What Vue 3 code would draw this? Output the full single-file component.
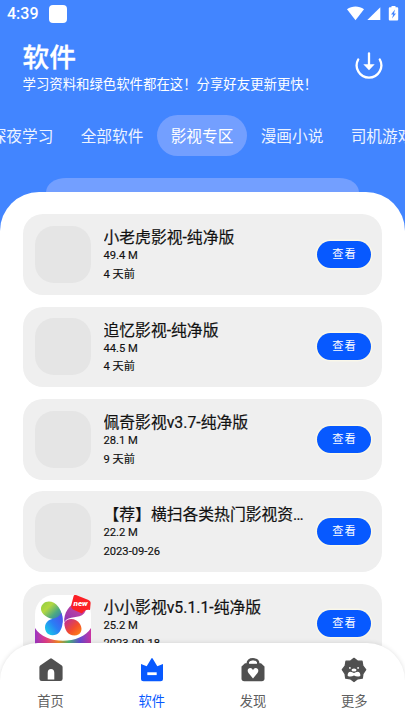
<script setup>
const tabs = ['深夜学习', '全部软件', '影视专区', '漫画小说', '司机游戏']
const apps = [
  { name: '小老虎影视-纯净版', size: '49.4 M', date: '4 天前' },
  { name: '追忆影视-纯净版', size: '44.5 M', date: '4 天前' },
  { name: '佩奇影视v3.7-纯净版', size: '28.1 M', date: '9 天前' },
  { name: '【荐】横扫各类热门影视资源', size: '22.2 M', date: '2023-09-26' },
  { name: '小小影视v5.1.1-纯净版', size: '25.2 M', date: '2023-09-18', logo: true },
]
const nav = [
  { label: '首页', icon: 'home' },
  { label: '软件', icon: 'crown', active: true },
  { label: '发现', icon: 'bag' },
  { label: '更多', icon: 'lion' },
]
</script>

<template>
  <div class="screen">
    <div class="status">
      <span class="time">4:39</span>
      <span class="square"></span>
      <svg class="signals" width="54" height="18" viewBox="0 0 54 18">
        <path d="M1 4.200C6 .7 13 .7 18 4.200L9.500 15.200Z" fill="#fff" />
        <path d="M34.300 2.300V15H21.300Z" fill="#fff" />
        <path d="M45.500 1h4v1.300h1.700a1 1 0 0 1 1 1V14.500a1 1 0 0 1-1 1h-7.400a1 1 0 0 1-1-1V3.300a1 1 0 0 1 1-1h1.700Z" fill="#fff" />
        <path d="M49 4.500 45 9.500h2.200L46 13.500 50 8.500H48Z" fill="#4285ff" />
      </svg>
    </div>

    <header class="head">
      <div>
        <h1>软件</h1>
        <p>学习资料和绿色软件都在这！分享好友更新更快！</p>
      </div>
      <svg class="download" width="30" height="30" viewBox="0 0 30 30">
        <path d="M4.200 9.500A12.300 12.300 0 1 0 25.800 9.500" fill="none" stroke="#fff" stroke-width="2.300" stroke-linecap="round" />
        <path d="M15 3.500V17" stroke="#fff" stroke-width="2.300" stroke-linecap="round" />
        <path d="M9.300 14.300H20.700L15 20.200Z" fill="#fff" />
      </svg>
    </header>

    <nav class="tabs">
      <span v-for="(t, i) in tabs" :key="t" class="tab" :class="{ on: i === 2 }">{{ t }}</span>
    </nav>

    <div class="peek"></div>
    <main class="sheet">
      <article v-for="a in apps" :key="a.name" class="card">
        <div class="thumb" :class="{ logo: a.logo }">
          <svg v-if="a.logo" width="56" height="57" viewBox="0 0 56 57">
            <defs>
              <linearGradient id="wa" x1="0" y1="0" x2="1" y2="1">
                <stop offset="0" stop-color="#8ccf45" /><stop offset=".3" stop-color="#b4d840" /><stop offset=".6" stop-color="#4aa983" /><stop offset="1" stop-color="#3157dc" />
              </linearGradient>
              <linearGradient id="wb" x1="1" y1="0" x2="0" y2="1">
                <stop offset="0" stop-color="#5447e8" /><stop offset=".5" stop-color="#2a7df5" /><stop offset="1" stop-color="#16dde5" />
              </linearGradient>
              <linearGradient id="wc" x1="1" y1="0" x2="0" y2="1">
                <stop offset="0" stop-color="#d84898" /><stop offset="1" stop-color="#8b35b5" />
              </linearGradient>
              <linearGradient id="wd" x1="0" y1="0" x2="1" y2="1">
                <stop offset="0" stop-color="#b52ba8" /><stop offset=".55" stop-color="#f34c2d" /><stop offset="1" stop-color="#ff8b13" />
              </linearGradient>
              <linearGradient id="we">
                <stop offset="0" stop-color="#9b35c2" /><stop offset=".2" stop-color="#e23d86" /><stop offset=".42" stop-color="#f38b23" /><stop offset=".6" stop-color="#48b875" /><stop offset=".8" stop-color="#654bd2" /><stop offset="1" stop-color="#cb32a0" />
              </linearGradient>
            </defs>
            <path d="M27.500 28C25 22.500 20 26 13 22.500C6 19 4 13 8 9C12 5 19 6 23.500 12C27 17 28 22 27.500 28Z" fill="url(#wa)" />
            <path d="M29.300 27C28.500 19 34 8.500 43 7.500C50 7 53 14 49 18.500C44 24 34 20 29.300 27Z" fill="url(#wc)" />
            <path d="M26.500 18C28.500 25 28 32 24.500 37C21 41.500 13.500 41.500 11 36.500C8.500 31 11 25.500 17 24C21 23 24 22 26.500 18Z" fill="url(#wb)" />
            <path d="M29.300 28C32 22.500 41 22.500 45 29C48.500 35 45.500 40.500 39.500 40.500C33 40.500 29.500 35 29.300 28Z" fill="url(#wd)" />
            <path d="M0 33C10 50 46 50 56 33V57H0Z" fill="url(#we)" />
            <path d="M41 0 53.500 5Q56 6 55.600 8.500L55 15Q50 14 47 18.500L38 14.500Q35.500 13 36.300 10L38.500 1.500Q39.200 -.7 41 0Z" fill="#fb2026" />
            <text x="38.500" y="10.500" class="tag">new</text>
          </svg>
        </div>
        <div class="info">
          <h2>{{ a.name }}</h2>
          <div class="meta">{{ a.size }}</div>
          <div class="meta date">{{ a.date }}</div>
        </div>
        <button class="view">查看</button>
      </article>
    </main>

    <footer class="bottom">
      <div v-for="n in nav" :key="n.icon" class="item" :class="{ active: n.active }">
        <svg width="26" height="26" viewBox="0 0 26 26">
          <template v-if="n.icon === 'home'">
            <path d="M12 1.700Q13 1 14 1.700L23.800 8.400Q24.600 9 24.600 10.200V21.700Q24.600 24 22.300 24H3.700Q1.400 24 1.400 21.700V10.200Q1.400 9 2.200 8.400Z" fill="#505050" />
            <path d="M9.700 22.500V16Q9.700 12 13 12T16.300 16V22.500Z" fill="#fff" />
          </template>
          <template v-else-if="n.icon === 'crown'">
            <path d="M2 7 7.700 9.300 12.200 1.700Q13 .5 13.800 1.700L18.300 9.300 24 7V21.800Q24 24.300 21.500 24.300H4.500Q2 24.300 2 21.800Z" fill="#0759ff" />
            <path d="M8.300 16.700H17.700" stroke="#fff" stroke-width="2.800" />
          </template>
          <template v-else-if="n.icon === 'bag'">
            <path d="M7.700 8V6.500Q7.700 2.300 13 2.300T18.300 6.500V8" fill="none" stroke="#505050" stroke-width="2.400" />
            <path d="M5 6.200H21L24.500 9.500V21.500Q24.500 24.300 21.700 24.300H4.300Q1.500 24.300 1.500 21.500V9.500Z" fill="#505050" />
            <path d="M9 6.800Q9.200 3.800 13 3.800T17 6.800Z" fill="#fff" />
            <path d="M13 21.600 8.500 16C5.500 11.500 11.500 9 13 13.300C14.500 9 20.500 11.500 17.500 16Z" fill="#fff" />
          </template>
          <template v-else>
            <path d="M13 1.300 16.500 4 21 4.200 21.800 8.800 24.700 12.700 21.900 16.800 21.300 21.200 16.700 21.800 13 24.500 9.300 21.800 4.700 21.200 4.100 16.800 1.300 12.700 4.200 8.800 5 4.200 9.500 4Z" fill="#505050" stroke="#505050" stroke-width="1.300" stroke-linejoin="round" />
            <path d="M6.700 19Q6.300 15 9.500 14.800L11.300 15.200Q13 16.800 14.700 15.200L16.500 14.800Q19.700 15 19.300 19Q16 20.300 13 18.500Q10 20.300 6.700 19Z" fill="#fff" />
            <ellipse cx="13" cy="13" rx="2.500" ry="1.500" fill="#fff" />
            <circle cx="8.900" cy="10.900" r=".9" fill="#fff" /><circle cx="17.100" cy="10.900" r=".9" fill="#fff" />
          </template>
        </svg>
        <span>{{ n.label }}</span>
      </div>
    </footer>
  </div>
</template>

<style>
body { margin: 0; overflow: hidden; }
</style>

<style scoped>
* { box-sizing: border-box; }
.screen {
  width: 405px;
  height: 720px;
  overflow: hidden;
  position: relative;
  display: flex;
  flex-direction: column;
  background: #4285ff;
  color: #fff;
  font-family: Roboto, "Noto Sans CJK SC", sans-serif;
}
.status {
  height: 28px;
  flex: none;
  display: flex;
  align-items: center;
  padding: 0 5px 0 7px;
}
.time { font-size: 16px; font-weight: 500; width: 42px; margin-top: -1px; }
.square { width: 18px; height: 18px; border-radius: 4px; background: #fff; margin-top: -1px; }
.signals { margin-left: auto; }
.head {
  height: 87px;
  flex: none;
  display: flex;
  justify-content: space-between;
  padding: 13px 21px 0 22.5px;
}
h1 { margin: 0; font-size: 26.7px; line-height: 34px; font-weight: 500; -webkit-text-stroke: .3px #fff; }
p { margin: 0; font-size: 13.4px; line-height: 20px; white-space: nowrap; }
.download { margin-top: 9px; flex: none; }
.tabs {
  height: 41px;
  flex: none;
  display: flex;
  margin-left: -23px;
}
.tab {
  flex: none;
  width: 90px;
  height: 41px;
  padding-top: 1px;
  line-height: 41px;
  border-radius: 21px;
  text-align: center;
  font-size: 15.7px;
  color: #edf3ff;
}
.tab.on { background: #739fff; color: #fff; }
.peek {
  flex: none;
  height: 14px;
  margin: 22px 46px 0;
  border-radius: 20px 20px 0 0 / 14px 14px 0 0;
  background: #739fff;
}
.sheet {
  flex: 1;
  min-height: 0;
  overflow: hidden;
  background: #fff;
  border-radius: 39px 39px 0 0;
  padding: 22.4px 23px 0;
  display: flex;
  flex-direction: column;
  gap: 11.7px;
}
.card {
  flex: none;
  height: 80.6px;
  border-radius: 20px;
  background: #efefef;
  display: flex;
  align-items: center;
  padding: 0 11px 0 12px;
}
.thumb {
  width: 56px;
  height: 57px;
  flex: none;
  border-radius: 19px;
  background: #e5e5e5;
}
.thumb.logo { background: #fff; }
.thumb svg { display: block; }
.tag { font-size: 8px; font-weight: 900; font-style: italic; fill: #fff; }
.info { flex: 1; min-width: 0; margin-left: 12.5px; color: #111; }
h2 {
  margin: 0;
  width: 202px;
  font-size: 15.8px;
  line-height: 22px;
  font-weight: 400;
  -webkit-text-stroke: .2px #111;
  overflow: hidden;
  text-overflow: ellipsis;
  white-space: nowrap;
}
.meta { font-size: 11.2px; line-height: 14px; -webkit-text-stroke: .15px #111; }
.date { margin-top: 4.5px; }
.view {
  flex: none;
  width: 54px;
  height: 27px;
  padding: 1px 0 0 1px;
  border: 0;
  border-radius: 14px;
  background: #0759ff;
  box-shadow: 0 0 0 1.5px #faf7e9;
  color: #fff;
  font: 400 11.2px/26px Roboto, "Noto Sans CJK SC", sans-serif;
  letter-spacing: 1px;
}
.bottom {
  position: absolute;
  left: 0;
  right: 0;
  bottom: 0;
  height: 77px;
  display: flex;
  background: #fff;
  border-radius: 38px 38px 0 0;
  box-shadow: 0 0 5px rgba(0, 0, 0, .12);
}
.item {
  flex: 1;
  display: flex;
  flex-direction: column;
  align-items: center;
  padding-top: 14px;
  color: #606060;
  font-size: 13.3px;
  line-height: 20px;
}
.item span { margin-top: 9px; }
.item.active { color: #0759ff; }
</style>
